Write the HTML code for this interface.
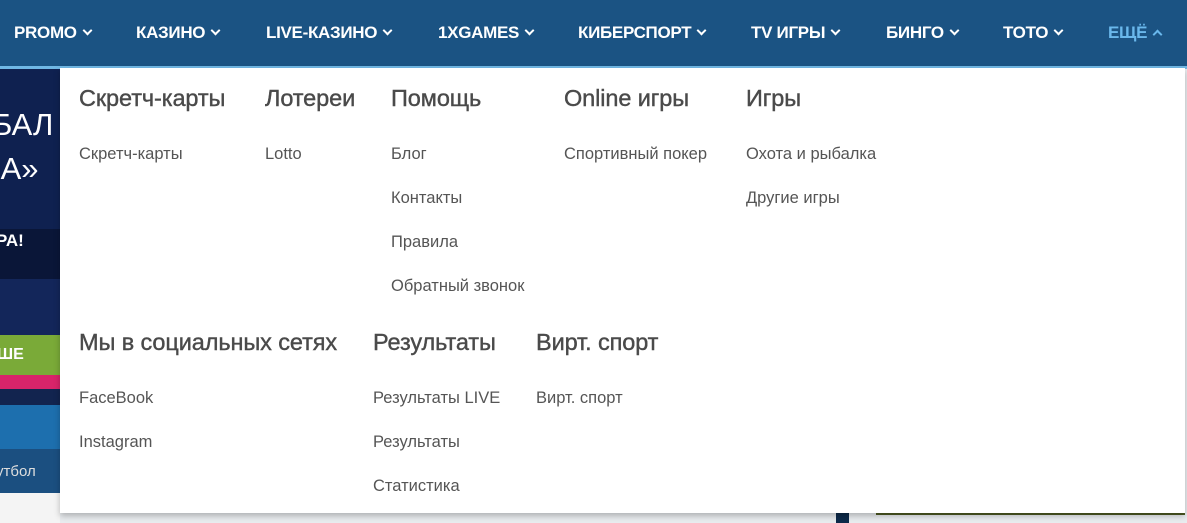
<!DOCTYPE html>
<html><head><meta charset="utf-8"><style>
*{margin:0;padding:0;box-sizing:border-box}
body{width:1187px;height:523px;overflow:hidden;background:#e9ecef;font-family:"Liberation Sans",sans-serif;position:relative}
.nav{position:absolute;left:0;top:0;width:1187px;height:66px;background:#1b5383}
.nav span{position:absolute;top:23px;color:#fff;font-weight:bold;font-size:17px;letter-spacing:-0.3px;white-space:nowrap}
.nav span i{display:inline-block;width:7px;height:7px;border-right:2px solid #fff;border-bottom:2px solid #fff;transform:rotate(45deg);margin-left:7px;position:relative;top:-4px}
.nav span.on{color:#6ab8ec}
.nav span.on i{border-color:#6ab8ec;transform:rotate(225deg);top:0}
.line{position:absolute;left:0;top:66px;width:1187px;height:3px;background:#70b7e4}
.left{position:absolute;left:0;top:69px;width:60px;height:454px;background:#0d1c48;overflow:hidden}
.left div{position:absolute;left:0;width:60px}
.drop{position:absolute;left:60px;top:68px;width:1125px;height:445px;background:#fff;box-shadow:0 3px 6px rgba(0,0,0,.25)}
.h{position:absolute;font-size:23.5px;color:#4a4a4a;white-space:nowrap;-webkit-text-stroke:0.4px #4a4a4a;letter-spacing:-0.1px}
.i{position:absolute;font-size:16.5px;color:#555;white-space:nowrap}
</style></head><body>
<div class="nav">
<span style="left:14px">PROMO<i></i></span>
<span style="left:136px">КАЗИНО<i></i></span>
<span style="left:266px">LIVE-КАЗИНО<i></i></span>
<span style="left:438px">1XGAMES<i></i></span>
<span style="left:578px">КИБЕРСПОРТ<i></i></span>
<span style="left:751px">TV ИГРЫ<i></i></span>
<span style="left:886px">БИНГО<i></i></span>
<span style="left:1003px">ТОТО<i></i></span>
<span class="on" style="left:1108px">ЕЩЁ<i></i></span>
</div>
<div class="line"></div>
<div class="left">
<div style="top:0;height:160px;background:#0f2150"></div>
<div style="top:38px;color:#fff;font-size:31px;left:-8px;width:80px">БАЛ</div>
<div style="top:82px;color:#fff;font-size:31px;left:-8px;width:80px">ІА»</div>
<div style="top:160px;height:50px;background:#0a1638"></div>
<div style="top:162px;color:#fff;font-size:17px;font-weight:bold;left:-4px">РА!</div>
<div style="top:210px;height:56px;background:#13265a"></div>
<div style="top:266px;height:40px;background:#7aaa38;color:#fff;font-weight:bold;font-size:16px;padding-top:11px;left:-3px;width:63px">ШЕ</div>
<div style="top:306px;height:14px;background:#d8246a"></div>
<div style="top:320px;height:16px;background:#12244f"></div>
<div style="top:336px;height:44px;background:#1d6fae"></div>
<div style="top:380px;height:44px;background:#1b4f80;color:#ddd;font-size:15px;padding-top:14px;left:-4px;width:64px">утбол</div>
<div style="top:424px;height:30px;background:#f4f4f4"></div>
</div>
<div style="position:absolute;left:836px;top:513px;width:13px;height:10px;background:#0d2a4a"></div>
<div style="position:absolute;left:876px;top:513px;width:309px;height:2px;background:#4d5a22"></div>
<div class="drop">
<div class="h" style="left:19px;top:17px">Скретч-карты</div>
<div class="h" style="left:205px;top:17px">Лотереи</div>
<div class="h" style="left:331px;top:17px">Помощь</div>
<div class="h" style="left:504px;top:17px">Online игры</div>
<div class="h" style="left:686px;top:17px">Игры</div>
<div class="i" style="left:19px;top:77px">Скретч-карты</div>
<div class="i" style="left:205px;top:77px">Lotto</div>
<div class="i" style="left:331px;top:77px">Блог</div>
<div class="i" style="left:331px;top:121px">Контакты</div>
<div class="i" style="left:331px;top:165px">Правила</div>
<div class="i" style="left:331px;top:209px">Обратный звонок</div>
<div class="i" style="left:504px;top:77px">Спортивный покер</div>
<div class="i" style="left:686px;top:77px">Охота и рыбалка</div>
<div class="i" style="left:686px;top:121px">Другие игры</div>
<div class="h" style="left:19px;top:261px">Мы в социальных сетях</div>
<div class="h" style="left:313px;top:261px">Результаты</div>
<div class="h" style="left:476px;top:261px">Вирт. спорт</div>
<div class="i" style="left:19px;top:321px">FaceBook</div>
<div class="i" style="left:19px;top:365px">Instagram</div>
<div class="i" style="left:313px;top:321px">Результаты LIVE</div>
<div class="i" style="left:313px;top:365px">Результаты</div>
<div class="i" style="left:313px;top:409px">Статистика</div>
<div class="i" style="left:476px;top:321px">Вирт. спорт</div>
</div>
</body></html>
